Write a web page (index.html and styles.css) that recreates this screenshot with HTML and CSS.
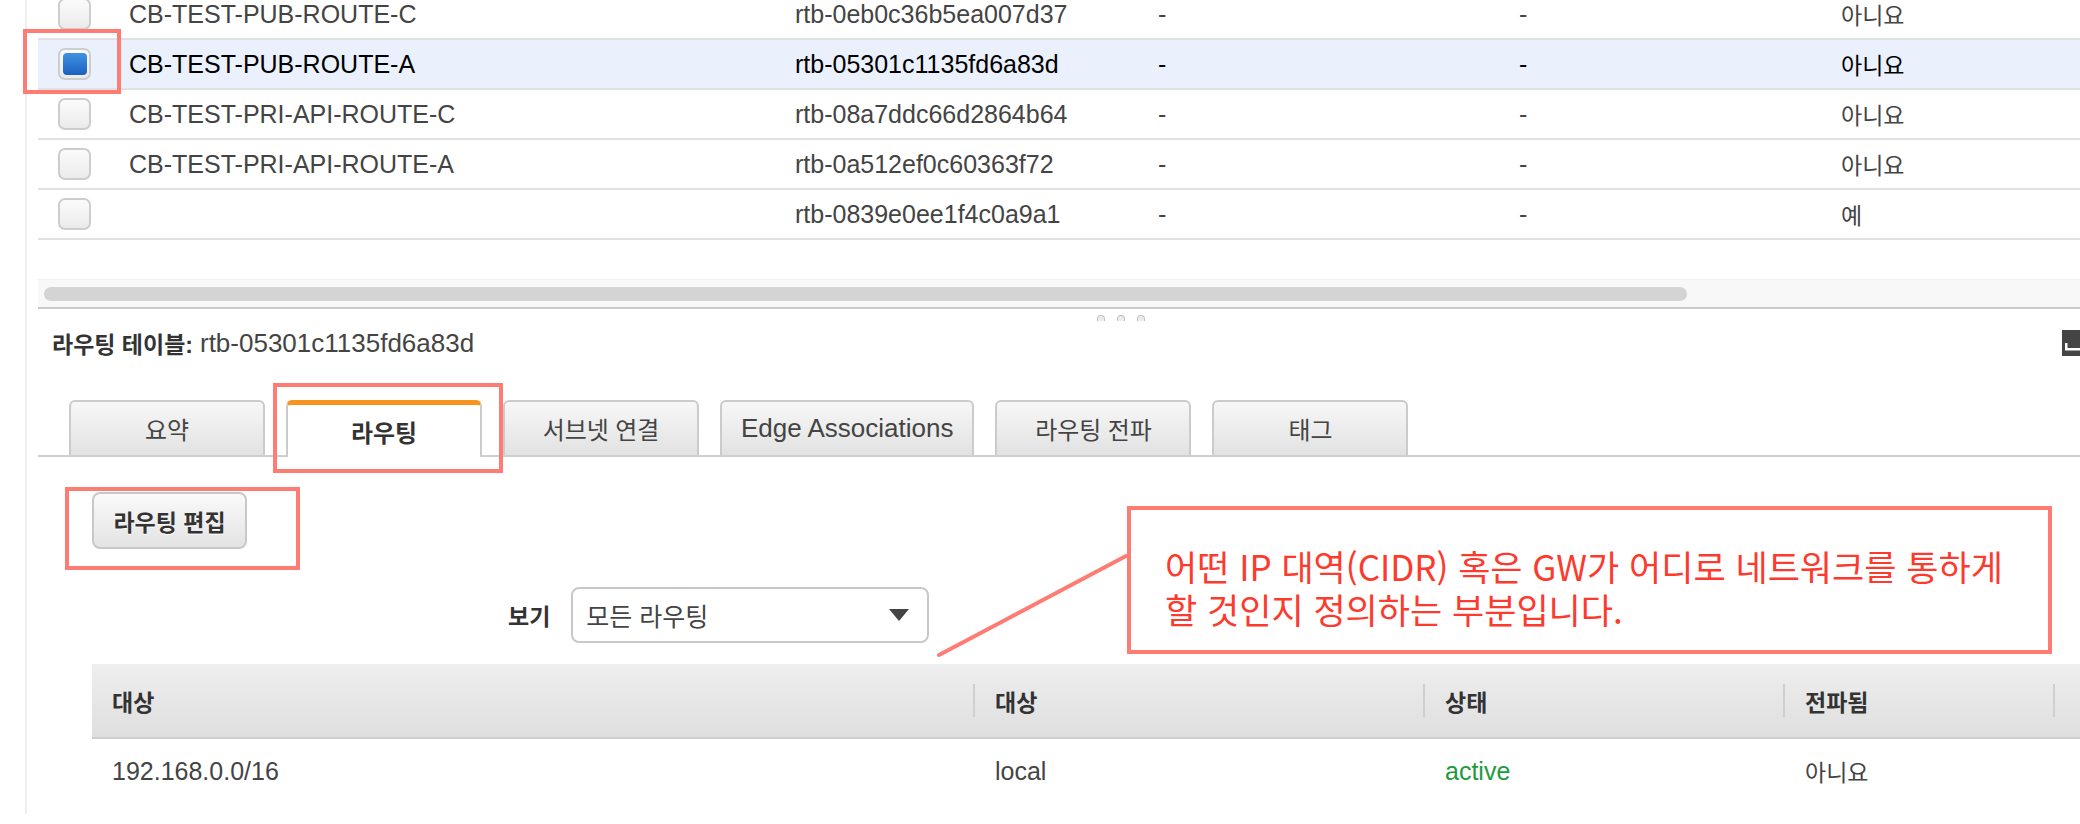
FILE: index.html
```html
<!DOCTYPE html>
<html lang="ko">
<head>
<meta charset="utf-8">
<title>라우팅 테이블</title>
<link rel="stylesheet" href="styles.css">
</head>
<body>
<div class="page">
  <div class="panel">
    <div class="grid">
      <div class="row">
        <div class="cb"><span class="check"></span></div>
        <div>CB-TEST-PUB-ROUTE-C</div>
        <div>rtb-0eb0c36b5ea007d37</div>
        <div>-</div>
        <div>-</div>
        <div class="ko">아니요</div>
      </div>
      <div class="row selected">
        <div class="cb"><span class="check on"></span></div>
        <div>CB-TEST-PUB-ROUTE-A</div>
        <div>rtb-05301c1135fd6a83d</div>
        <div>-</div>
        <div>-</div>
        <div class="ko">아니요</div>
      </div>
      <div class="row">
        <div class="cb"><span class="check"></span></div>
        <div>CB-TEST-PRI-API-ROUTE-C</div>
        <div>rtb-08a7ddc66d2864b64</div>
        <div>-</div>
        <div>-</div>
        <div class="ko">아니요</div>
      </div>
      <div class="row">
        <div class="cb"><span class="check"></span></div>
        <div>CB-TEST-PRI-API-ROUTE-A</div>
        <div>rtb-0a512ef0c60363f72</div>
        <div>-</div>
        <div>-</div>
        <div class="ko">아니요</div>
      </div>
      <div class="row">
        <div class="cb"><span class="check"></span></div>
        <div></div>
        <div>rtb-0839e0ee1f4c0a9a1</div>
        <div>-</div>
        <div>-</div>
        <div class="ko">예</div>
      </div>
    </div>

    <div class="hscroll"><div class="thumb"></div></div>

    <div class="splitter"><span></span><span></span><span></span></div>

    <div class="detail-title">
      <b class="ko">라우팅 테이블:</b>&nbsp;<span class="rtb-id">rtb-05301c1135fd6a83d</span>
      <svg class="dock" width="26" height="26" viewBox="0 0 26 26"><rect x="0" y="0" width="26" height="26" fill="#444"/><rect x="3" y="18" width="20" height="2.5" fill="#fff"/><rect x="3" y="13" width="2.5" height="7" fill="#fff"/></svg>
    </div>

    <div class="tabs">
      <div class="tab"><span class="ko">요약</span></div>
      <div class="tab active"><span class="ko">라우팅</span></div>
      <div class="tab"><span class="ko">서브넷 연결</span></div>
      <div class="tab">Edge Associations</div>
      <div class="tab"><span class="ko">라우팅 전파</span></div>
      <div class="tab"><span class="ko">태그</span></div>
    </div>

    <div class="tabbody">
      <button class="btn ko">라우팅 편집</button>

      <div class="filter">
        <span class="filter-label ko">보기</span>
        <div class="select"><span class="ko">모든 라우팅</span><span class="caret"></span></div>
      </div>

      <div class="rtable">
        <div class="rhead">
          <div class="c1 ko">대상</div>
          <div class="c2 ko">대상</div>
          <div class="c3 ko">상태</div>
          <div class="c4 ko">전파됨</div>
          <div class="c5"></div>
        </div>
        <div class="rrow">
          <div class="c1">192.168.0.0/16</div>
          <div class="c2">local</div>
          <div class="c3 ok">active</div>
          <div class="c4 ko">아니요</div>
          <div class="c5"></div>
        </div>
      </div>
    </div>
  </div>

  <div class="hl hl-check"></div>
  <div class="hl hl-tab"></div>
  <div class="hl hl-btn"></div>

  <svg class="connector" width="2080" height="824" viewBox="0 0 2080 824">
    <line x1="939" y1="655" x2="1126" y2="556" stroke="#fe7c74" stroke-width="4" stroke-linecap="round"/>
  </svg>

  <div class="note">
    <div class="note-line">어떤 IP 대역(CIDR) 혹은 GW가 어디로 네트워크를 통하게</div>
    <div class="note-line">할 것인지 정의하는 부분입니다.</div>
  </div>
</div>
</body>
</html>
```

FILE: styles.css
```css
* {
  box-sizing: border-box;
}

html,
body {
  margin: 0;
  padding: 0;
  background: #fff;
}

body {
  font-family: "Liberation Sans", "Noto Sans CJK KR", sans-serif;
  font-size: 25px;
  color: #444;
  overflow: hidden;
}

.page {
  position: relative;
  width: 2080px;
  height: 824px;
  overflow: hidden;
}

.panel {
  margin-left: 25px;
  border-left: 2px solid #efefef;
  padding-left: 11px;
  height: 100%;
}

/* top list */
.grid {
  margin-top: -10px;
}

.row {
  display: grid;
  grid-template-columns: 91px 666px 363px 361px 322px 1fr;
  align-items: center;
  height: 50px;
  border-bottom: 2px solid #e1e1e1;
  white-space: nowrap;
}

.row.selected {
  background: #eaf1fc;
  color: #000;
}

.cb {
  display: flex;
  align-items: center;
  padding-left: 20px;
}

.check {
  display: flex;
  align-items: center;
  justify-content: center;
  width: 33px;
  height: 32px;
  border: 2px solid #cdcdcd;
  border-radius: 7px;
  background: linear-gradient(#fbfbfb, #ebebeb);
}

.check.on::after {
  content: "";
  width: 24px;
  height: 22px;
  border-radius: 4px;
  background: linear-gradient(#4191e2, #1a62c0);
}

.ko {
  font-size: 0.92em;
}

/* horizontal scrollbar */
.hscroll {
  margin-top: 39px;
  height: 30px;
  padding: 7px 0 0 6px;
  background: #f8f8f8;
  border-top: 1px solid #f1f1f1;
  border-bottom: 2px solid #c9c9c9;
}

.thumb {
  width: 1643px;
  height: 14px;
  border-radius: 7px;
  background: #d4d4d4;
}

/* split handle */
.splitter {
  display: flex;
  gap: 12px;
  height: 19px;
  padding: 6px 0 0 1059px;
}

.splitter span {
  width: 8px;
  height: 6px;
  border: 1px solid #c4c4c4;
  border-bottom: none;
  border-radius: 4px 4px 0 0;
  background: #ececec;
}

/* detail header */
.detail-title {
  display: flex;
  align-items: center;
  height: 30px;
  padding-left: 14px;
  white-space: nowrap;
}

.detail-title b {
  font-weight: 700;
  color: #333;
}

.rtb-id {
  font-size: 26px;
}

.dock {
  margin-left: auto;
  margin-right: -8px;
}

/* tabs */
.tabs {
  display: flex;
  align-items: flex-end;
  gap: 21px;
  height: 57px;
  margin-top: 42px;
  padding-left: 31px;
  border-bottom: 2px solid #cfcfcf;
  font-size: 26px;
}

.tab {
  display: flex;
  align-items: center;
  justify-content: center;
  min-width: 196px;
  height: 55px;
  padding: 0 19px;
  border: 2px solid #cbcbcb;
  border-bottom: none;
  border-radius: 6px 6px 0 0;
  background: linear-gradient(#f7f7f7, #e2e2e2);
  color: #444;
  white-space: nowrap;
}

.tab.active {
  height: 57px;
  margin-bottom: -2px;
  padding-top: 1px;
  background: #fff;
  border-top: 5px solid #f7941e;
  font-weight: 700;
  color: #333;
}

/* tab body */
.tabbody {
  padding-left: 54px;
}

.btn {
  display: block;
  width: 155px;
  height: 57px;
  margin-top: 35px;
  padding: 0;
  border: 2px solid #c8c8c8;
  border-radius: 8px;
  background: linear-gradient(#fafafa, #e3e3e3);
  font-family: inherit;
  font-weight: 700;
  color: #333;
  text-shadow: 0 1px 0 #fff;
}

.btn.ko {
  font-size: 23px;
}

.filter {
  display: flex;
  align-items: center;
  gap: 21px;
  margin-top: 38px;
  padding-left: 416px;
}

.filter-label {
  font-weight: 700;
  color: #333;
}

.select {
  display: flex;
  align-items: center;
  justify-content: space-between;
  width: 358px;
  height: 56px;
  padding: 0 18px 0 13px;
  border: 2px solid #c8c8c8;
  border-radius: 8px;
  background: #fff;
  color: #444;
}

.select .ko {
  font-size: 1em;
}

.caret {
  width: 0;
  height: 0;
  border-left: 10px solid transparent;
  border-right: 10px solid transparent;
  border-top: 12px solid #444;
}

/* routes table */
.rtable {
  margin-top: 21px;
}

.rhead,
.rrow {
  display: grid;
  grid-template-columns: 881px 450px 360px 270px 1fr;
  align-items: center;
  white-space: nowrap;
}

.rhead {
  height: 75px;
  border-bottom: 2px solid #cdcdcd;
  background: linear-gradient(#eeeeee, #dfdfdf);
  font-weight: 700;
  color: #333;
}

.rhead > div {
  height: 100%;
  display: flex;
  align-items: center;
  padding-left: 22px;
  background: linear-gradient(#cfcfcf, #cfcfcf) no-repeat left center / 2px 33px;
}

.rhead > .c1 {
  padding-left: 20px;
  background: none;
}

.rrow {
  height: 64px;
}

.rrow > div {
  padding-left: 22px;
}

.rrow > .c1 {
  padding-left: 20px;
}

.ok {
  color: #1e9b3d;
}

/* annotations */
.hl {
  position: absolute;
  border: 4px solid #fe7c74;
}

.hl-check {
  left: 23px;
  top: 29px;
  width: 98px;
  height: 65px;
}

.hl-tab {
  left: 273px;
  top: 383px;
  width: 230px;
  height: 90px;
}

.hl-btn {
  left: 65px;
  top: 487px;
  width: 235px;
  height: 83px;
}

.connector {
  position: absolute;
  left: 0;
  top: 0;
  pointer-events: none;
}

.note {
  position: absolute;
  left: 1127px;
  top: 506px;
  width: 925px;
  height: 148px;
  padding: 34px 0 0 34px;
  border: 4px solid #fe7c74;
  background: #fff;
  font-family: "Noto Sans CJK KR", "Liberation Sans", sans-serif;
  font-size: 35px;
  line-height: 43px;
  color: #fc3a2e;
  white-space: nowrap;
}

.note-line {
  height: 43px;
}
```
